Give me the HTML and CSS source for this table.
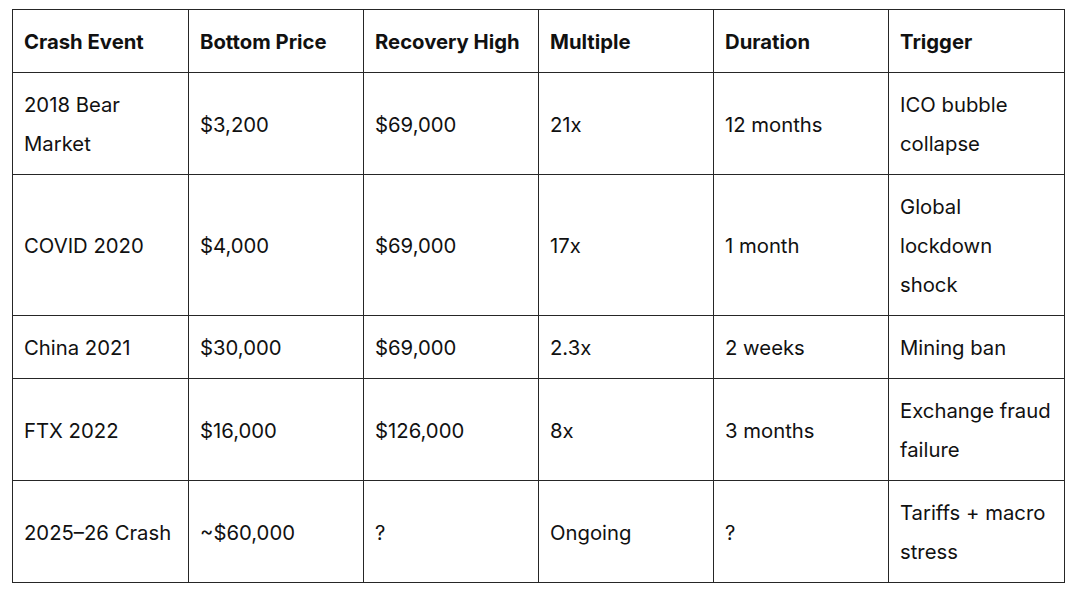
FILE: index.html
```html
<!DOCTYPE html>
<html>
<head>
<meta charset="utf-8">
<link rel="stylesheet" href="styles.css">
</head>
<body>
<table class="crash-table">
  <colgroup>
    <col class="c1"><col class="c2"><col class="c3"><col class="c4"><col class="c5"><col class="c6">
  </colgroup>
  <thead>
    <tr><th>Crash Event</th><th>Bottom Price</th><th>Recovery High</th><th>Multiple</th><th>Duration</th><th>Trigger</th></tr>
  </thead>
  <tbody>
    <tr><td>2018 Bear Market</td><td>$3,200</td><td>$69,000</td><td>21x</td><td>12 months</td><td>ICO bubble collapse</td></tr>
    <tr><td>COVID 2020</td><td>$4,000</td><td>$69,000</td><td>17x</td><td>1 month</td><td>Global lockdown shock</td></tr>
    <tr><td>China 2021</td><td>$30,000</td><td>$69,000</td><td>2.3x</td><td>2 weeks</td><td>Mining ban</td></tr>
    <tr><td>FTX 2022</td><td>$16,000</td><td>$126,000</td><td>8x</td><td>3 months</td><td>Exchange fraud failure</td></tr>
    <tr><td>2025–26 Crash</td><td>~$60,000</td><td>?</td><td>Ongoing</td><td>?</td><td>Tariffs + macro stress</td></tr>
  </tbody>
</table>
</body>
</html>
```

FILE: styles.css
```css
html, body {
  margin: 0;
  background: #ffffff;
}
body {
  padding: 9px 12px;
  font-family: Inter, "Liberation Sans", sans-serif;
  color: #111111;
}
.crash-table {
  border-collapse: collapse;
  width: 1053px;
  table-layout: fixed;
  font-size: 20.3px;
  line-height: 39px;
}
.crash-table .c1, .crash-table .c6 { width: 176px; }
.crash-table .c2, .crash-table .c3, .crash-table .c4, .crash-table .c5 { width: 175px; }
.crash-table th,
.crash-table td {
  border: 1px solid #262626;
  padding: 12px 10px 11px 11px;
  text-align: left;
  vertical-align: middle;
}
.crash-table th {
  font-weight: 700;
}
.crash-table td {
  font-weight: 400;
}
```
